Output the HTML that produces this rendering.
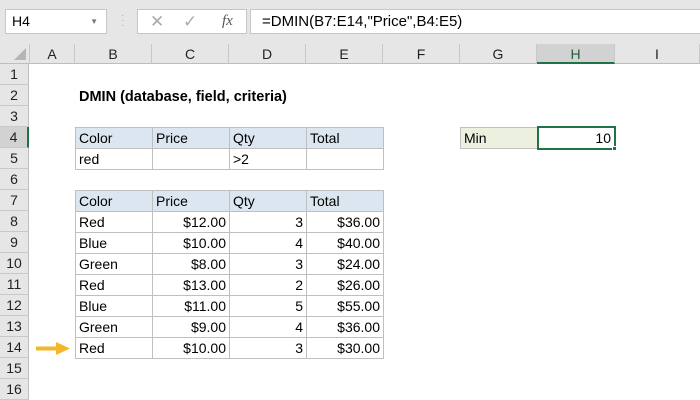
<!DOCTYPE html>
<html><head><meta charset="utf-8"><style>
*{margin:0;padding:0;box-sizing:border-box}
body{width:700px;height:400px;overflow:hidden;background:#fff;font-family:"Liberation Sans",Arial,sans-serif;font-size:14px;color:#000;position:relative}
.a{position:absolute}
.top{left:0;top:0;width:700px;height:44px;background:#e6e6e6}
.box{background:#fff;border:1px solid #c6c6c6}
.ch{top:44px;height:20px;background:#e6e6e6;border-right:1px solid #c8c8c8;border-bottom:1px solid #bdbdbd;text-align:center;line-height:20px;font-size:14px;color:#222}
.rh{left:0;width:29px;height:21px;background:#e6e6e6;border-bottom:1px solid #c8c8c8;border-right:1px solid #bdbdbd;text-align:center;line-height:21px;color:#222}
.c{height:22px;border:1px solid #bfbfbf;line-height:20px;padding:0 3px;white-space:nowrap}
.h{background:#dce6f0}
.r{text-align:right}
</style></head><body>
<div class="a top"></div>
<div class="a box" style="left:5px;top:9px;width:102px;height:25px;line-height:23px;padding-left:6px">H4<span style="position:absolute;right:8px;top:0;font-size:8px;color:#777">▼</span></div>
<div class="a" style="left:121px;top:13px;color:#aaa;font-size:10px;line-height:5px">·<br>·<br>·</div>
<div class="a box" style="left:137px;top:9px;width:110px;height:25px;color:#aaa">
<span class="a" style="left:12px;top:2px;font-size:17px">✕</span>
<span class="a" style="left:45px;top:2px;font-size:17px">✓</span>
<span class="a" style="left:84px;top:3px;font-family:'Liberation Serif',serif;font-style:italic;font-size:15px;color:#555">fx</span></div>
<div class="a box" style="left:250px;top:9px;width:452px;height:25px;line-height:23px;padding-left:11px;font-size:15px">=DMIN(B7:E14,"Price",B4:E5)</div>

<div class="a ch" style="left:0;width:30px"><div class="a" style="right:3px;bottom:3px;width:0;height:0;border-left:12px solid transparent;border-bottom:12px solid #b5b5b5"></div></div>
<div class="a ch" style="left:30px;width:45px">A</div>
<div class="a ch" style="left:75px;width:77px">B</div>
<div class="a ch" style="left:152px;width:77px">C</div>
<div class="a ch" style="left:229px;width:77px">D</div>
<div class="a ch" style="left:306px;width:77px">E</div>
<div class="a ch" style="left:383px;width:77px">F</div>
<div class="a ch" style="left:460px;width:77px">G</div>
<div class="a ch" style="left:537px;width:78px;background:#d2d2d2;border-bottom:2px solid #217346;color:#1e5e3a">H</div>
<div class="a ch" style="left:615px;width:85px">I</div>

<div class="a rh" style="top:64px">1</div>
<div class="a rh" style="top:85px">2</div>
<div class="a rh" style="top:106px">3</div>
<div class="a rh" style="top:127px;background:#d2d2d2;border-right:2px solid #217346">4</div>
<div class="a rh" style="top:148px">5</div>
<div class="a rh" style="top:169px">6</div>
<div class="a rh" style="top:190px">7</div>
<div class="a rh" style="top:211px">8</div>
<div class="a rh" style="top:232px">9</div>
<div class="a rh" style="top:253px">10</div>
<div class="a rh" style="top:274px">11</div>
<div class="a rh" style="top:295px">12</div>
<div class="a rh" style="top:316px">13</div>
<div class="a rh" style="top:337px">14</div>
<div class="a rh" style="top:358px">15</div>
<div class="a rh" style="top:379px">16</div>

<div class="a" style="left:79px;top:88px;font-weight:bold;line-height:18px;font-size:14.5px">DMIN (database, field, criteria)</div>

<div class="a c h" style="left:75px;top:127px;width:78px">Color</div>
<div class="a c h" style="left:152px;top:127px;width:78px">Price</div>
<div class="a c h" style="left:229px;top:127px;width:78px">Qty</div>
<div class="a c h" style="left:306px;top:127px;width:78px">Total</div>
<div class="a c" style="left:75px;top:148px;width:78px">red</div>
<div class="a c" style="left:152px;top:148px;width:78px"></div>
<div class="a c" style="left:229px;top:148px;width:78px">&gt;2</div>
<div class="a c" style="left:306px;top:148px;width:78px"></div>

<div class="a c h" style="left:75px;top:190px;width:78px">Color</div>
<div class="a c h" style="left:152px;top:190px;width:78px">Price</div>
<div class="a c h" style="left:229px;top:190px;width:78px">Qty</div>
<div class="a c h" style="left:306px;top:190px;width:78px">Total</div>

<div class="a c" style="left:75px;top:211px;width:78px">Red</div><div class="a c r" style="left:152px;top:211px;width:78px">$12.00</div><div class="a c r" style="left:229px;top:211px;width:78px">3</div><div class="a c r" style="left:306px;top:211px;width:78px">$36.00</div>
<div class="a c" style="left:75px;top:232px;width:78px">Blue</div><div class="a c r" style="left:152px;top:232px;width:78px">$10.00</div><div class="a c r" style="left:229px;top:232px;width:78px">4</div><div class="a c r" style="left:306px;top:232px;width:78px">$40.00</div>
<div class="a c" style="left:75px;top:253px;width:78px">Green</div><div class="a c r" style="left:152px;top:253px;width:78px">$8.00</div><div class="a c r" style="left:229px;top:253px;width:78px">3</div><div class="a c r" style="left:306px;top:253px;width:78px">$24.00</div>
<div class="a c" style="left:75px;top:274px;width:78px">Red</div><div class="a c r" style="left:152px;top:274px;width:78px">$13.00</div><div class="a c r" style="left:229px;top:274px;width:78px">2</div><div class="a c r" style="left:306px;top:274px;width:78px">$26.00</div>
<div class="a c" style="left:75px;top:295px;width:78px">Blue</div><div class="a c r" style="left:152px;top:295px;width:78px">$11.00</div><div class="a c r" style="left:229px;top:295px;width:78px">5</div><div class="a c r" style="left:306px;top:295px;width:78px">$55.00</div>
<div class="a c" style="left:75px;top:316px;width:78px">Green</div><div class="a c r" style="left:152px;top:316px;width:78px">$9.00</div><div class="a c r" style="left:229px;top:316px;width:78px">4</div><div class="a c r" style="left:306px;top:316px;width:78px">$36.00</div>
<div class="a c" style="left:75px;top:337px;width:78px">Red</div><div class="a c r" style="left:152px;top:337px;width:78px">$10.00</div><div class="a c r" style="left:229px;top:337px;width:78px">3</div><div class="a c r" style="left:306px;top:337px;width:78px">$30.00</div>

<svg class="a" style="left:36px;top:341px" width="36" height="15"><path d="M1 7.5H22" stroke="#f4b62a" stroke-width="4" stroke-linecap="round"/><path d="M20 1L34 7.5L20 14Z" fill="#f4b62a"/></svg>

<div class="a c" style="left:460px;top:127px;width:78px;background:#ebf1de">Min</div>
<div class="a c r" style="left:537px;top:126px;width:79px;height:24px;border:2px solid #217346;line-height:20px">10</div>
<div class="a" style="left:612px;top:146px;width:5px;height:5px;background:#217346;border:1px solid #fff"></div>
</body></html>
